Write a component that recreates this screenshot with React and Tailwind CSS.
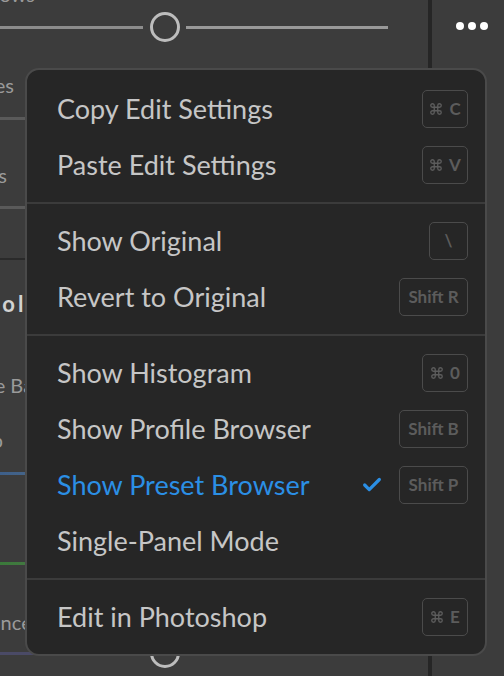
import { Check, Command } from "lucide-react";

const groups = [
  [
    { label: "Copy Edit Settings", keys: ["cmd", "C"], w: "w-[46px]" },
    { label: "Paste Edit Settings", keys: ["cmd", "V"], w: "w-[46px]" },
  ],
  [
    { label: "Show Original", keys: ["\\"], w: "w-[39px]" },
    { label: "Revert to Original", keys: ["Shift R"], w: "w-[69px]" },
  ],
  [
    { label: "Show Histogram", keys: ["cmd", "0"], w: "w-[46px]" },
    { label: "Show Profile Browser", keys: ["Shift B"], w: "w-[69px]" },
    { label: "Show Preset Browser", keys: ["Shift P"], w: "w-[69px]", active: true },
    { label: "Single-Panel Mode" },
  ],
  [{ label: "Edit in Photoshop", keys: ["cmd", "E"], w: "w-[46px]" }],
];

function Shortcut({ keys, w }) {
  return (
    <span
      className={`${w} h-[38px] shrink-0 flex items-center justify-center gap-[6px] rounded-[5px] border-[1.5px] border-[#4b4b4b] text-[17px] font-bold text-[#5c5c5c]`}
    >
      {keys.map((k) =>
        k === "cmd" ? (
          <Command key={k} className="h-[14px] w-[14px]" strokeWidth={2.3} />
        ) : (
          <span key={k}>{k}</span>
        )
      )}
    </span>
  );
}

function Slider({ track = "bg-[#8c8c8c]", rest = "bg-[#999999]", className = "" }) {
  return (
    <div className={`h-[30px] flex items-center ${className}`}>
      <div className={`w-[143px] h-[3px] ${track}`} />
      <div className="ml-[7px] h-[30px] w-[30px] rounded-full border-[3px] border-[#bdbdbd]" />
      <div className={`ml-[6px] w-[202px] h-[3px] ${rest}`} />
    </div>
  );
}

export default function App() {
  return (
    <div className="relative w-[504px] h-[676px] overflow-hidden bg-[#3c3c3c] flex font-['Lato',sans-serif]">
      {/* left edit panel */}
      <div className="w-[428px] shrink-0 flex flex-col text-[20px] text-[#9a9a9a]">
        <div className="-mt-[18px] h-[24px] w-[35px] flex justify-end items-center whitespace-nowrap">
          Shadows
        </div>
        <Slider className="mt-[6px]" />
        <div className="mt-[31px] h-[24px] w-[14px] flex justify-end items-center whitespace-nowrap">
          Whites
        </div>
        <div className="mt-[20px] h-[3px] w-full bg-[#5a5a5a]" />
        <div className="mt-[43px] h-[24px] w-[7px] flex justify-end items-center whitespace-nowrap">
          Blacks
        </div>
        <div className="mt-[19px] h-[3px] w-full bg-[#5a5a5a]" />
        <div className="mt-[49px] h-[2px] w-full bg-[#2a2a2a]" />
        <div className="mt-[31px] h-[24px] -ml-[15px] flex items-center whitespace-nowrap text-[22px] font-bold tracking-[3px] text-[#d2d2d2]">
          Color
        </div>
        <div className="mt-[58px] h-[24px] -ml-[49px] flex items-center whitespace-nowrap">
          White Balance
        </div>
        <div className="mt-[31px] h-[24px] w-[3px] flex justify-end items-center whitespace-nowrap">
          Temp
        </div>
        <div className="mt-[20px] h-[3px] w-full bg-gradient-to-r from-[#3d5f8a] to-[#b9a24a]" />
        <div className="mt-[43px] h-[24px] w-[0px] flex justify-end items-center whitespace-nowrap">
          Tint
        </div>
        <div className="mt-[20px] h-[3px] w-full bg-gradient-to-r from-[#3a7a3a] to-[#8a4a8a]" />
        <div className="mt-[45px] h-[24px] -ml-[46px] flex items-center whitespace-nowrap">
          Vibrance
        </div>
        <Slider className="mt-[4px]" track="bg-[#4a4a66]" rest="bg-[#7a6a9a]" />
      </div>

      <div className="w-[4px] shrink-0 bg-[#262626]" />

      {/* right toolbar */}
      <div className="flex-1 flex gap-[4px] pl-[24px] pt-[22px]">
        <span className="h-[8px] w-[8px] rounded-full bg-white" />
        <span className="h-[8px] w-[8px] rounded-full bg-white" />
        <span className="h-[8px] w-[8px] rounded-full bg-white" />
      </div>

      {/* context menu */}
      <div className="absolute left-[25px] top-[68px] w-[462px] pt-[2px] rounded-[14px] border-2 border-[#4a4a4a] bg-[#262626]">
        {groups.map((items, gi) => (
          <div key={gi} className={gi > 0 ? "border-t-2 border-[#3b3b3b]" : ""}>
            <div className="py-[9px]">
              {items.map((it) => (
                <div key={it.label} className="h-[56px] flex items-center pl-[30px] pr-[17px]">
                  <span
                    className={`flex-1 text-[27px] whitespace-nowrap ${
                      it.active ? "text-[#2b8fe5]" : "text-[#c6c6c6]"
                    }`}
                  >
                    {it.label}
                  </span>
                  {it.active ? (
                    <Check className="mr-[16px] h-[22px] w-[22px] text-[#2b8fe5]" strokeWidth={3.5} />
                  ) : null}
                  {it.keys ? <Shortcut keys={it.keys} w={it.w} /> : null}
                </div>
              ))}
            </div>
          </div>
        ))}
      </div>
    </div>
  );
}
